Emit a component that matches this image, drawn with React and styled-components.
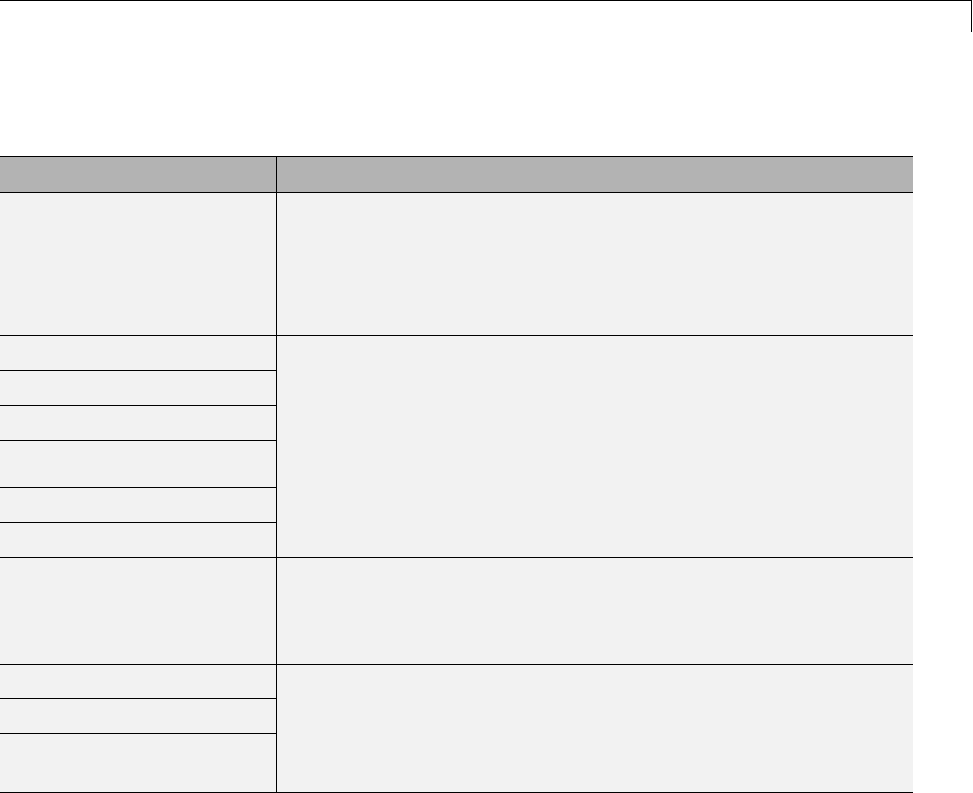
import React from "react";
import styled, { createGlobalStyle } from "styled-components";

const GlobalStyle = createGlobalStyle`
  html, body {
    margin: 0;
    padding: 0;
    background: #ffffff;
    font-family: "Liberation Sans", Arial, sans-serif;
  }
`;

const Page = styled.div`
  width: 973px;
  display: flex;
  flex-direction: column;
`;

const TopRule = styled.div`
  width: 971px;
  height: 31px;
  border-top: 1px solid #000;
  border-right: 1px solid #000;
`;

const Table = styled.div`
  width: 913px;
  margin-top: 124px;
  display: flex;
  flex-direction: column;
  border-top: 1px solid #000;
`;

const Row = styled.div`
  display: grid;
  grid-template-columns: 276px 1fr;
  border-bottom: 1px solid #000;
`;

const HeadCell = styled.div`
  height: 35px;
  background: #b3b3b3;
  & + & {
    border-left: 1px solid #000;
  }
`;

const LeftStack = styled.div`
  display: flex;
  flex-direction: column;
  background: #f2f2f2;
`;

const Cell = styled.div`
  height: ${(p) => p.$h}px;
  background: #f2f2f2;
  & + & {
    border-top: 1px solid #000;
  }
`;

const RightCell = styled.div`
  background: #f2f2f2;
  border-left: 1px solid #000;
`;

const groups = [
  [142],
  [34, 34, 34, 46, 34, 34],
  [106],
  [33, 34, 58],
];

export default function App() {
  return (
    <>
      <GlobalStyle />
      <Page>
        <TopRule />
        <Table>
          <Row>
            <HeadCell />
            <HeadCell />
          </Row>
          {groups.map((cells, gi) => (
            <Row key={gi}>
              <LeftStack>
                {cells.map((h, ci) => (
                  <Cell key={ci} $h={h} />
                ))}
              </LeftStack>
              <RightCell />
            </Row>
          ))}
        </Table>
      </Page>
    </>
  );
}
